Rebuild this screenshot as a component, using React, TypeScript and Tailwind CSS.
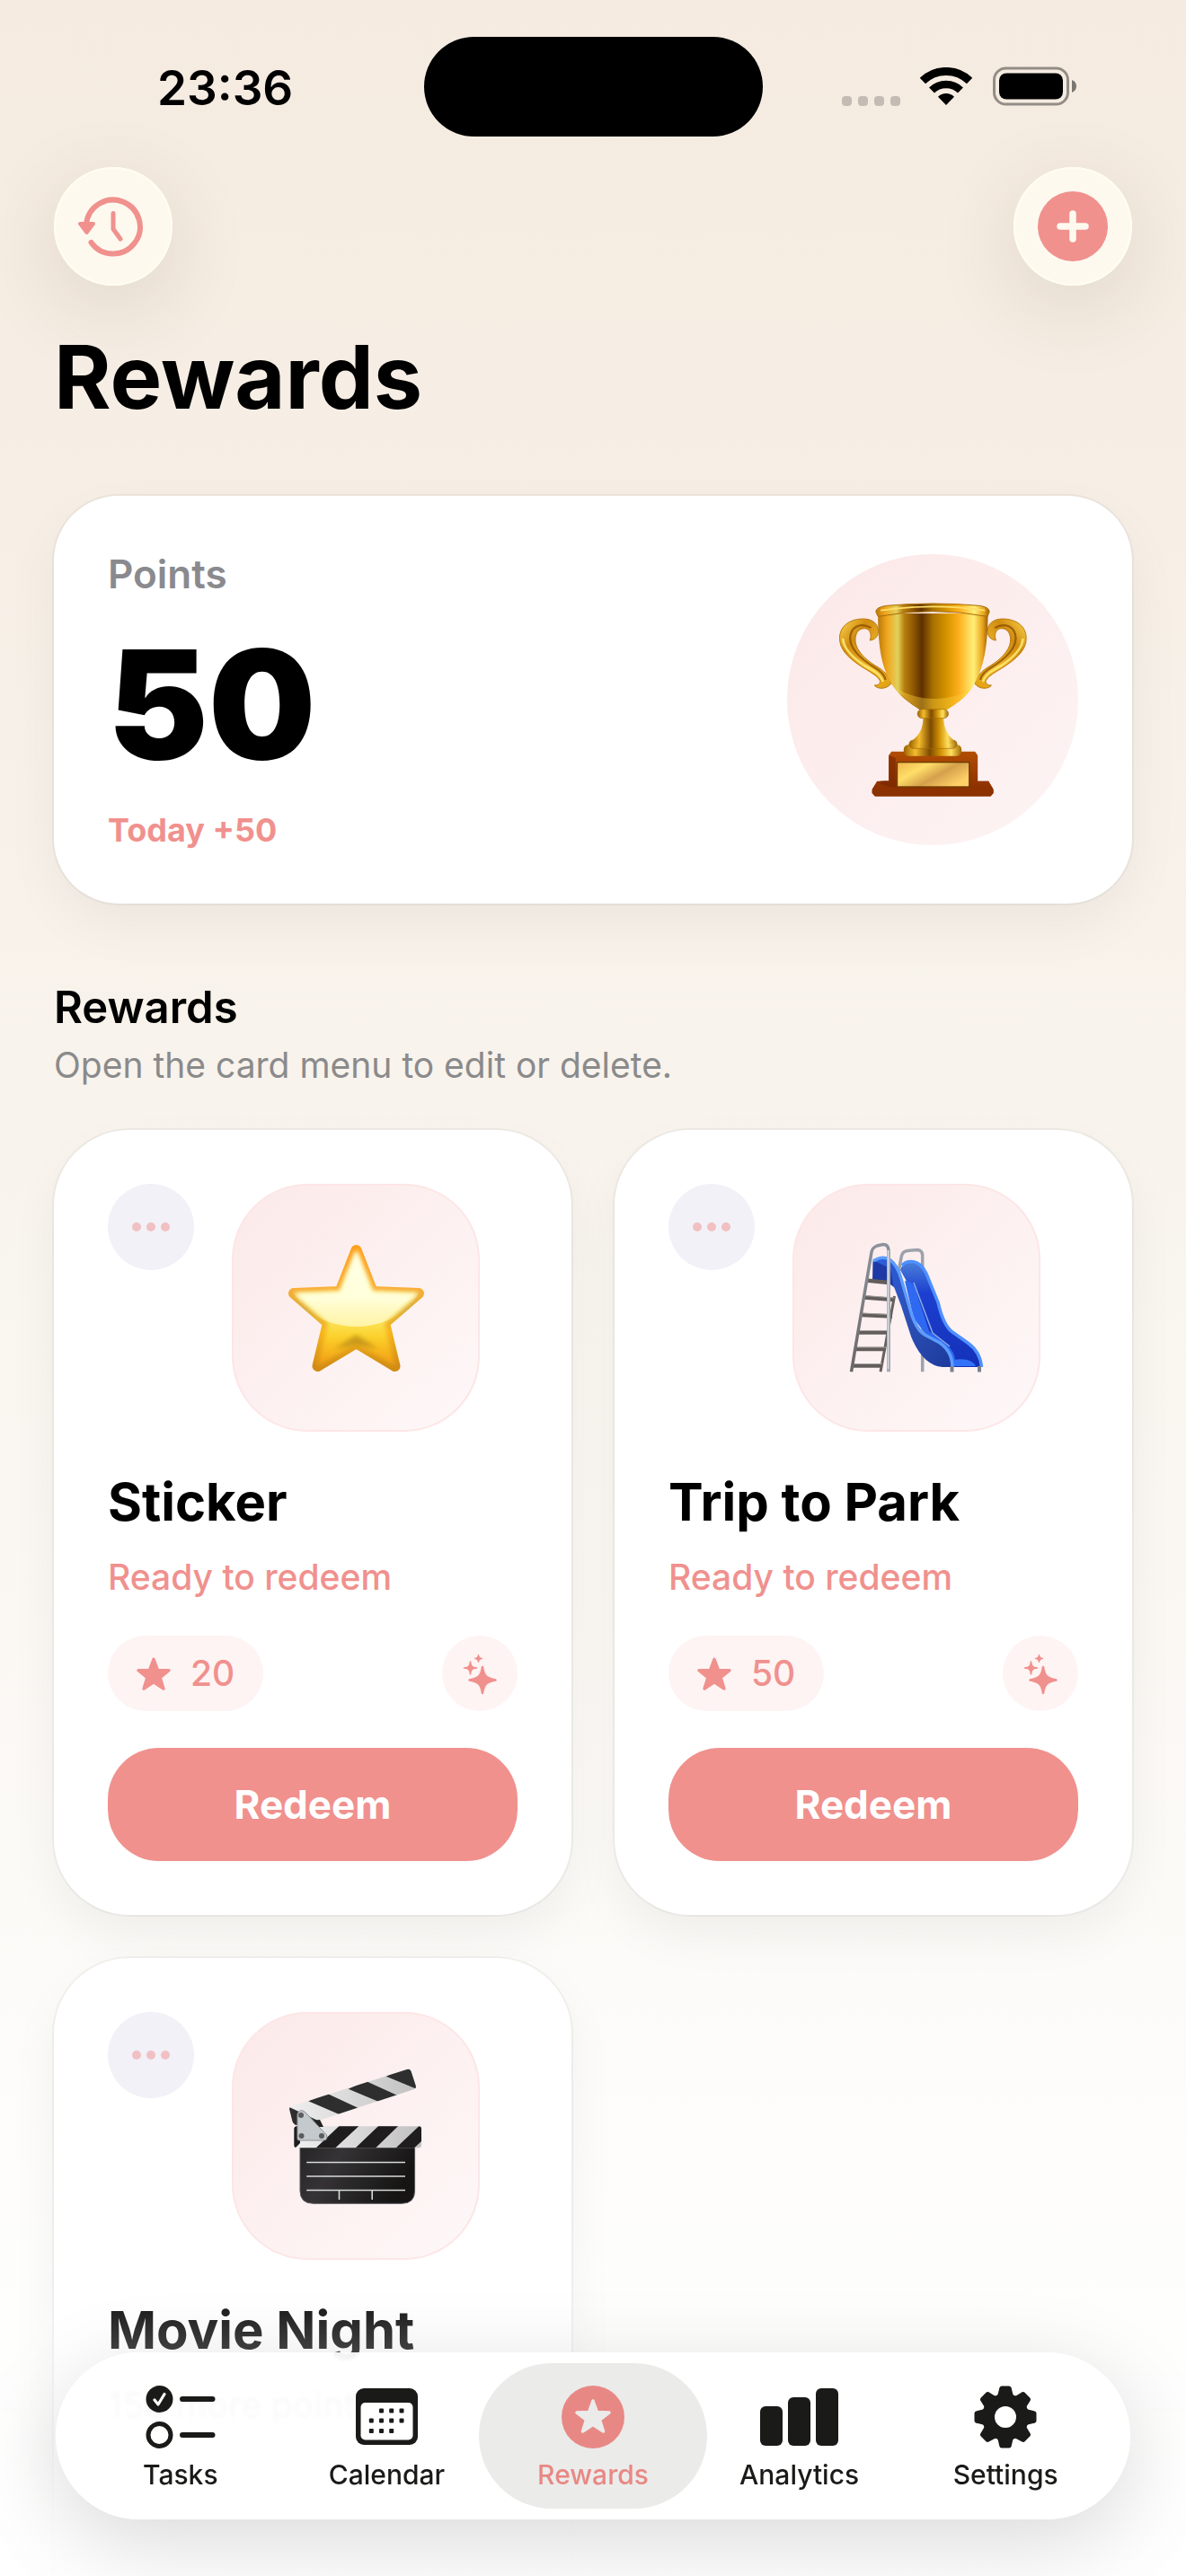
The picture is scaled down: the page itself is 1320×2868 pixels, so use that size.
import type { ReactNode } from "react";

const STAR_PATH =
  "M50 6 L62 38 L95 39 L69 60 L79 93 L50 74 L21 93 L31 60 L5 39 L38 38 Z";

function StarIcon({ className }: { className?: string }) {
  return (
    <svg viewBox="0 0 100 98" className={className} aria-hidden="true">
      <path d={STAR_PATH} fill="currentColor" stroke="currentColor" strokeWidth="9" strokeLinejoin="round" />
    </svg>
  );
}

function HistoryIcon() {
  return (
    <svg viewBox="0 0 132 132" className="size-full" fill="none" stroke="#f0918e" strokeLinecap="round" strokeLinejoin="round" aria-hidden="true">
      <path d="M41.500 84 A30 30 0 1 0 36 64" strokeWidth="6" />
      <path d="M66 51.500 V69 L74 80" strokeWidth="5" />
      <path d="M29 63 H44 L36.500 73 Z" strokeWidth="4" fill="#f0918e" />
    </svg>
  );
}

function PlusIcon() {
  return (
    <svg viewBox="0 0 132 132" className="size-full" aria-hidden="true">
      <circle cx="66" cy="66" r="39" fill="#f0918e" />
      <path d="M66 52 V80 M52 66 H80" stroke="#fef9ef" strokeWidth="7.500" strokeLinecap="round" />
    </svg>
  );
}

function SparklesIcon() {
  return (
    <svg viewBox="0 0 84 84" className="size-full" fill="#f0918e" stroke="#f0918e" strokeLinejoin="round" aria-hidden="true">
      <path d="M45 35 C46.500 45 49 47.500 59.500 49.500 C49 51.500 46.500 54 45 64 C43.500 54 41 51.500 30.500 49.500 C41 47.500 43.500 45 45 35Z" strokeWidth="2.500" />
      <path d="M31.500 29 C32 34 33.500 35.500 38.500 36 C33.500 36.500 32 38 31.500 43 C31 38 29.500 36.500 24.500 36 C29.500 35.500 31 34 31.500 29Z" strokeWidth="1.500" />
      <path d="M40.500 21 C41 24 42 25 45 25.500 C42 26 41 27 40.500 30 C40 27 39 26 36 25.500 C39 25 40 24 40.500 21Z" strokeWidth="1" />
    </svg>
  );
}

function StatusIcons() {
  return (
    <div className="flex items-center" aria-hidden="true">
      <div className="mt-8 mr-[22px] flex gap-[7px]">
        {[0, 1, 2, 3].map((i) => (
          <span key={i} className="size-[11px] rounded-[4px] bg-black/20" />
        ))}
      </div>
      <svg viewBox="0 0 58 42" className="mr-[23px] h-[42px] w-[58px]" fill="none" stroke="#000">
        <path d="M2.900 15 A37.500 37.500 0 0 1 55.100 15" strokeWidth="9" />
        <path d="M13 25.500 A23 23 0 0 1 45 25.500" strokeWidth="8.500" />
        <path d="M29 42 L20 32.700 A13 13 0 0 1 38 32.700Z" fill="#000" stroke="none" />
      </svg>
      <svg viewBox="0 0 94 44" className="h-11 w-[94px]">
        <rect x="1.500" y="2" width="82" height="40" rx="13" fill="none" stroke="#000" strokeOpacity=".4" strokeWidth="3" />
        <rect x="7" y="7.500" width="71" height="29" rx="8" />
        <path d="M88 15 Q93 17 93 22 Q93 27 88 29Z" fillOpacity=".5" />
      </svg>
    </div>
  );
}

function TrophyArt() {
  return (
    <svg viewBox="270 270 650 660" className="h-[220px] w-[217px]" role="img" aria-label="Trophy">
      <defs>
        <linearGradient id="cup" x1="0" x2="1">
          <stop offset="0" stopColor="#b87a0c" />
          <stop offset=".08" stopColor="#f0a41c" />
          <stop offset=".18" stopColor="#e2d15c" />
          <stop offset=".24" stopColor="#b87f0e" />
          <stop offset=".32" stopColor="#905800" />
          <stop offset=".4" stopColor="#5e3000" />
          <stop offset=".5" stopColor="#a87000" />
          <stop offset=".64" stopColor="#dc9800" />
          <stop offset=".74" stopColor="#ffb020" />
          <stop offset=".87" stopColor="#fff078" />
          <stop offset=".95" stopColor="#eaa41e" />
          <stop offset="1" stopColor="#9a6005" />
        </linearGradient>
        <linearGradient id="stem" x1="0" x2="1">
          <stop offset="0" stopColor="#9a6200" />
          <stop offset=".2" stopColor="#f4bc2c" />
          <stop offset=".45" stopColor="#7d4a00" />
          <stop offset=".65" stopColor="#d69708" />
          <stop offset=".82" stopColor="#ffdf60" />
          <stop offset="1" stopColor="#a06800" />
        </linearGradient>
        <linearGradient id="handle" x1="0" x2="1" y1="0" y2="1">
          <stop offset="0" stopColor="#ffd850" />
          <stop offset=".28" stopColor="#d08c10" />
          <stop offset=".6" stopColor="#f0b528" />
          <stop offset="1" stopColor="#e0a010" />
        </linearGradient>
        <linearGradient id="plate" x1="0" x2="1" y2=".6">
          <stop offset="0" stopColor="#eeb54b" />
          <stop offset=".35" stopColor="#ffde68" />
          <stop offset=".65" stopColor="#d5a04c" />
          <stop offset="1" stopColor="#ffd068" />
        </linearGradient>
        <linearGradient id="wood" x1="0" x2="0" y1="0" y2="1">
          <stop offset="0" stopColor="#b24e04" />
          <stop offset="1" stopColor="#8c3000" />
        </linearGradient>
        <g id="trophy-handle">
          <path
            d="M283 395 C283 350 322 330 362 330 C396 330 412 350 412 370 C412 390 400 400 384 402 C391 386 386 362 366 362 C342 362 333 385 336 408 C340 438 372 468 402 486 C434 504 446 520 455 546 C440 566 410 566 399 552 C414 552 420 545 417 535 C406 516 370 500 345 482 C308 456 283 430 283 395Z"
            fill="url(#handle)" stroke="#b87a10" strokeWidth="3"
          />
          <path d="M388 360 C350 340 318 358 318 396 C320 438 364 470 396 490 C420 504 434 516 436 534" fill="none" stroke="#8a4c00" strokeWidth="7" strokeOpacity=".75" />
          <path d="M294 396 C296 430 330 462 366 486 C400 504 420 516 428 540" fill="none" stroke="#fff07a" strokeWidth="8" strokeOpacity=".8" />
        </g>
      </defs>
      <use href="#trophy-handle" />
      <use href="#trophy-handle" transform="matrix(-1 0 0 1 1189 0)" />
      <path d="M391 900 L408 872 H780 L797 900 V912 L787 923 H401 L391 912Z" fill="#8c3100" />
      <path d="M447 786 L456 773 H735 L744 786 V872 H780 L795 898 H393 L408 875 Q430 868 447 872Z" fill="url(#wood)" />
      <path d="M447 786 L470 794 V893 Q430 890 410 876 L447 870Z" fill="#7a2600" fillOpacity=".65" />
      <rect x="475" y="809" width="241" height="82" fill="url(#plate)" stroke="#6b3b00" strokeWidth="4" />
      <rect x="497" y="750" width="193" height="38" rx="16" fill="url(#stem)" />
      <rect x="515" y="735" width="160" height="28" rx="14" fill="url(#stem)" stroke="#a06a08" strokeWidth="2" />
      <path d="M562 655 H630 C630 700 645 722 672 742 C640 756 550 756 518 742 C548 722 562 700 562 655Z" fill="url(#stem)" />
      <path
        d="M411 312 C411 430 425 500 462 556 C490 598 530 618 550 634 H640 C666 618 702 598 728 556 C764 498 778 420 778 312Z"
        fill="url(#cup)"
      />
      <path d="M470 560 C500 598 530 618 550 634 H640 C666 618 694 600 718 568 C640 610 540 605 470 560Z" fill="#ffcf3a" fillOpacity=".4" />
      <rect x="543" y="632" width="103" height="30" rx="15" fill="url(#stem)" stroke="#a06a08" strokeWidth="2" />
      <path d="M404 306 Q404 291 440 286 Q594 272 750 286 Q783 291 783 306 L777 322 Q594 288 411 322Z" fill="url(#cup)" stroke="#a76c08" strokeWidth="3" />
      <path d="M420 302 Q594 276 768 302" fill="none" stroke="#ffdf68" strokeWidth="5" />
    </svg>
  );
}

function GlossyStarArt() {
  const outline =
    "M354.500 152 L372.500 198 L424 200 L386 233 L397.500 281 L354.500 255 L311.500 281 L323 233 L285 200 L336.500 198 Z";
  return (
    <svg viewBox="279 145 151 143" className="h-[143px] w-[151px]" role="img" aria-label="Star">
      <defs>
        <linearGradient id="star-edge" x1="0" x2="0" y1="0" y2="1">
          <stop offset="0" stopColor="#ff9f1a" />
          <stop offset=".33" stopColor="#f8ad34" />
          <stop offset=".5" stopColor="#dcae3c" />
          <stop offset=".7" stopColor="#f7b41c" />
          <stop offset="1" stopColor="#d18c16" />
        </linearGradient>
        <linearGradient id="star-core" x1="0" x2="0" y1="0" y2="1">
          <stop offset="0" stopColor="#fff3a0" />
          <stop offset=".55" stopColor="#fdec6c" />
          <stop offset=".75" stopColor="#fbd02a" />
          <stop offset="1" stopColor="#f39a12" />
        </linearGradient>
        <linearGradient id="star-gloss" x1="0" x2="0" y1="0" y2="1">
          <stop offset="0" stopColor="#ffffe8" />
          <stop offset=".4" stopColor="#ffffdc" />
          <stop offset=".66" stopColor="#fff3a4" />
        </linearGradient>
        <filter id="star-soft" x="-10%" y="-10%" width="120%" height="120%">
          <feGaussianBlur stdDeviation="2.500" />
        </filter>
        <clipPath id="star-dome">
          <ellipse cx="354.500" cy="175" rx="76" ry="62" />
        </clipPath>
      </defs>
      <path d={outline} fill="url(#star-edge)" stroke="url(#star-edge)" strokeWidth="12" strokeLinejoin="round" />
      <path d={outline} fill="url(#star-core)" filter="url(#star-soft)" />
      <path d="M330 262 L354.500 246 L379 262 L354.500 257Z" fill="#a87c10" fillOpacity=".6" filter="url(#star-soft)" />
      <g clipPath="url(#star-dome)">
        <path d={outline} fill="url(#star-gloss)" filter="url(#star-soft)" />
      </g>
    </svg>
  );
}

function SlideArt() {
  return (
    <svg viewBox="284 145 150 146" className="h-[146px] w-[150px]" fill="none" role="img" aria-label="Playground slide">
      <defs>
        <linearGradient id="slide-side" x1="0" x2="1" y1="0" y2="1">
          <stop offset="0" stopColor="#2c5fe0" />
          <stop offset=".5" stopColor="#2d4fb4" />
          <stop offset="1" stopColor="#1c3a9c" />
        </linearGradient>
        <linearGradient id="slide-back" x1="0" x2="0" y1="0" y2="1">
          <stop offset="0" stopColor="#4b80d8" />
          <stop offset=".3" stopColor="#1c3fd0" />
          <stop offset="1" stopColor="#1431b8" />
        </linearGradient>
        <linearGradient id="steel" x1="0" x2="0" y1="0" y2="1">
          <stop offset="0" stopColor="#8b929c" />
          <stop offset="1" stopColor="#6a6766" />
        </linearGradient>
      </defs>
      <path d="M334.500 205 L319 289.300" stroke="#67615e" strokeWidth="3" />
      <path d="M339 178 L342.500 160 Q344 155 349 154.500 L360 153.500 Q365.700 154 365.700 160 V289.300" stroke="#9ca2ab" strokeWidth="3.500" />
      <path d="M310.500 166 Q322 158 334 168 L338 198 L330 192 L310 188Z" fill="#1d3aa6" />
      <path
        d="M341 176 Q344 166 353.500 166.500 Q364 167 370 180 L383 212 Q389 238 399 245 L416 257 Q431 267 432.500 284 H398 L372 250 L350 192Z"
        fill="url(#slide-back)"
      />
      <path d="M343 171 Q346 166.500 353.500 166.500 Q364 167 370 180 L383 212 Q389 238 399 245 L416 257 Q430 267 431.500 284" stroke="#4f90ff" strokeWidth="3.500" />
      <path d="M346 188 Q357 188 360 204 L373 244 L392 258 Q402 268 402 276 L424 283 H396 L356 230Z" fill="#2f69f2" />
      <path d="M356 190 L377 246 L396 261" stroke="#88a8e8" strokeWidth="1.500" />
      <path d="M400 276 Q420 273 425 283 H398Z" fill="#3372fb" />
      <path
        d="M312 166 Q322 158 330 164 Q338 170 342 186 L352 222 Q358 242 368 248 L386 258 Q400 268 400 284 H388 Q366 282 353 250 L342 216 L333 192 L330 174Z"
        fill="url(#slide-side)"
      />
      <path d="M311 166 Q322 159 330 165 Q338 171 342 186 L352 220 Q358 242 368 248 L385 257 Q399 267 399 284" stroke="#5c9cff" strokeWidth="3.500" />
      <g stroke="#635e5b" strokeWidth="4.500">
        <path d="M303 187.500 L328 190 M301 206.500 L334 209 M298.500 226 L332 227.500 M295 245.500 H327 M292 264 H325 M289 282.500 H321" />
      </g>
      <g stroke="#a5a19d" strokeWidth="1">
        <path d="M301 204.500 L334 207 M298.500 224 L330 225.500 M295 243.500 H327 M292 262 H325 M289 280.500 H321" />
      </g>
      <path d="M286.500 289.300 L309 156 Q310 151 315 149 L322 147.500 Q328 147.500 328 155" stroke="url(#steel)" strokeWidth="3.500" />
      <path d="M328 154 V289.300" stroke="#a6acb4" strokeWidth="4" />
      <path d="M327.500 154 V286" stroke="#dfe4ea" strokeWidth="1.200" />
      <path d="M398.500 283 V289.500 M429 283 V289.500" stroke="#7b8290" strokeWidth="4" />
    </svg>
  );
}

function ClapperArt() {
  return (
    <svg viewBox="279 144 150 153" className="h-[153px] w-[150px]" role="img" aria-label="Clapper board">
      <defs>
        <linearGradient id="slate" x1="0" x2="1" y1="0" y2=".3">
          <stop offset="0" stopColor="#262526" />
          <stop offset=".35" stopColor="#353335" />
          <stop offset="1" stopColor="#161514" />
        </linearGradient>
        <linearGradient id="chalk" x1="0" x2="1">
          <stop offset="0" stopColor="#f0f0f0" />
          <stop offset="1" stopColor="#c0c0c0" />
        </linearGradient>
        <clipPath id="arm">
          <path d="M280 190 Q280 188 282 187 L411 146 Q414 145 415.500 148 L421 165 Q421 167 419 168 L314 202.500 L287 208 Q284 206 283.500 204Z" />
        </clipPath>
        <clipPath id="bar">
          <rect x="285.300" y="209.300" width="141.700" height="24" rx="3" />
        </clipPath>
      </defs>
      <path d="M292 232 H419.600 V281 Q419.600 295.300 405 295.300 H307 Q292 295.300 292 281Z" fill="url(#slate)" stroke="#55555a" strokeWidth="1" />
      <path d="M299.200 249.500 H409 M299.200 265 H409 M299.200 280.500 H409 M335.500 280.500 V291 M372.200 280.500 V291" stroke="#d8dada" strokeWidth="1.600" fill="none" />
      <g clipPath="url(#arm)">
        <path d="M278 140 H424 V212 H278Z" fill="url(#chalk)" />
        <path d="M278 187 L314 204 L284 212 L278 205Z M301.200 181.300 L322.400 173 L356.300 188.700 L335.500 196Z M345.700 167.700 L365.300 159 L401 175.300 L379.600 182Z M387.800 153.700 L414.300 140 L426 150 L421.200 167.700Z" fill="#2e2e2e" />
      </g>
      <g clipPath="url(#bar)">
        <path d="M285 209 H428 V234 H285Z" fill="url(#chalk)" />
        <path d="M285 209 H292 V228 L286 234 H285Z M335.500 209 H357.500 L330.600 234 H309Z M379.200 209 H401.200 L375.500 234 H353Z M424.500 209 H428 V225 L418.400 234 H398Z" fill="#1f1d1e" />
      </g>
      <path d="M306 203 L314 202 L318 210 H310Z" fill="#222" />
      <path d="M289 196 Q290 191.700 294 191.700 Q297 192 299 195 L321.500 219 Q323 225 318 225 H291 Q289 225 289 223Z" fill="#c3c9cd" stroke="#8d9296" strokeWidth="1" />
      <g fill="#5b5b5d">
        <circle cx="293" cy="197" r="3" />
        <circle cx="293.500" cy="220" r="3" />
        <circle cx="316" cy="220" r="3" />
      </g>
    </svg>
  );
}

function TasksIcon() {
  return (
    <svg viewBox="0 0 78 72" className="h-[72px] w-[78px]" fill="none" stroke="#1a1a18" strokeLinecap="round" aria-hidden="true">
      <circle cx="15.500" cy="16" r="15" fill="#1a1a18" stroke="none" />
      <path d="M10 17 L14 22 L21 10.500" stroke="#fff" strokeWidth="3.200" strokeLinejoin="round" />
      <circle cx="15.500" cy="56" r="12.500" strokeWidth="5" />
      <path d="M41 16 H74.500 M41 56 H74.500" strokeWidth="6" />
    </svg>
  );
}

function CalendarIcon() {
  const dots = [
    [28.5, 29], [39.7, 29], [51, 29],
    [17.3, 40], [28.5, 40], [39.7, 40], [51, 40],
    [17.3, 51.5], [28.5, 51.5], [39.7, 51.5],
  ];
  return (
    <svg viewBox="0 0 69 72" className="h-[72px] w-[69px]" fill="#1a1a18" aria-hidden="true">
      <rect x="0" y="4" width="69" height="63" rx="9" />
      <rect x="5.500" y="20" width="58" height="41.500" rx="5" fill="#fff" />
      {dots.map(([x, y]) => (
        <rect key={`${x}-${y}`} x={x - 2.5} y={y - 2.5} width="5" height="5" rx="1" />
      ))}
    </svg>
  );
}

function RewardsIcon() {
  return (
    <svg viewBox="0 0 72 72" className="size-[72px]" aria-hidden="true">
      <circle cx="36" cy="36" r="35" fill="#e88885" />
      <path
        d="M36 18 L40.500 30.500 L54 31 L43.500 39 L47.500 52 L36 44.500 L24.500 52 L28.500 39 L18 31 L31.500 30.500Z"
        fill="#ebebea" stroke="#ebebea" strokeWidth="3.500" strokeLinejoin="round"
      />
    </svg>
  );
}

function AnalyticsIcon() {
  return (
    <svg viewBox="0 0 88 72" className="h-[72px] w-[88px]" fill="#1a1a18" aria-hidden="true">
      <rect x="0" y="24" width="25" height="44" rx="6" />
      <rect x="31" y="14" width="25" height="54" rx="6" />
      <rect x="62" y="4" width="25" height="64" rx="6" />
    </svg>
  );
}

function SettingsIcon() {
  return (
    <svg viewBox="0 0 72 72" className="size-[72px]" aria-hidden="true">
      <circle cx="36" cy="36" r="19" fill="none" stroke="#1a1a18" strokeWidth="14" />
      {[0, 45, 90, 135, 180, 225, 270, 315].map((deg) => (
        <path
          key={deg}
          d="M26 14 Q28 11 29 5 Q29.500 1.500 32 1.500 H40 Q42.500 1.500 43 5 Q44 11 46 14Z"
          fill="#1a1a18"
          transform={`rotate(${deg} 36 36)`}
        />
      ))}
    </svg>
  );
}

type Reward = {
  title: string;
  status: string;
  cost?: number;
  art: ReactNode;
};

// A reward without a cost is still locked.
const rewards: Reward[] = [
  { title: "Sticker", status: "Ready to redeem", cost: 20, art: <GlossyStarArt /> },
  { title: "Trip to Park", status: "Ready to redeem", cost: 50, art: <SlideArt /> },
  { title: "Movie Night", status: "150 more points", art: <ClapperArt /> },
];

const tabs = [
  { label: "Tasks", icon: <TasksIcon /> },
  { label: "Calendar", icon: <CalendarIcon /> },
  { label: "Rewards", icon: <RewardsIcon />, active: true },
  { label: "Analytics", icon: <AnalyticsIcon /> },
  { label: "Settings", icon: <SettingsIcon /> },
];

function RoundButton({ label, children }: { label: string; children: ReactNode }) {
  return (
    <button
      type="button"
      aria-label={label}
      className="size-[132px] rounded-full bg-[#fef9ef] shadow-[inset_0_0_0_2px_#fffdf0,0_24px_96px_rgba(60,40,20,0.12)]"
    >
      {children}
    </button>
  );
}

function RewardCard({ reward }: { reward: Reward }) {
  const ready = reward.cost !== undefined;
  return (
    <article className="flex flex-col rounded-[84px] bg-white p-[60px] shadow-[0_0_0_2px_rgba(0,0,0,0.04),0_24px_54px_rgba(0,0,0,0.05)]">
      <div className="flex items-start">
        <button
          type="button"
          aria-label={`${reward.title} menu`}
          className="flex size-24 items-center justify-center gap-[6px] rounded-full bg-[#f2f1f7]"
        >
          <span className="size-[10px] rounded-full bg-[#f1c0c3]" />
          <span className="size-[10px] rounded-full bg-[#f1c0c3]" />
          <span className="size-[10px] rounded-full bg-[#f1c0c3]" />
        </button>
        <div className="flex flex-1 justify-center">
          <div className="flex size-[276px] items-center justify-center rounded-[84px] border-2 border-[#fde6e6] bg-linear-to-br from-[#fce9e9] to-[#fef8f8]">
            {reward.art}
          </div>
        </div>
      </div>
      <h3 className="mt-[42px] text-[58px] leading-[72px] font-bold whitespace-nowrap">{reward.title}</h3>
      <p className={`mt-6 text-[39px] leading-[48px] font-medium whitespace-nowrap ${ready ? "text-[#f0918e]" : "text-[#6c6c70]"}`}>
        {reward.status}
      </p>
      {ready && (
        <>
          <div className="mt-[41px] flex items-center justify-between">
            <span className="flex h-[84px] items-center gap-[22px] rounded-full bg-[#fef4f3] px-8 text-[39px] leading-[48px] font-medium text-[#f0918e]">
              <StarIcon className="h-[37px] w-[38px]" />
              {reward.cost}
            </span>
            <span className="size-[84px] rounded-full bg-[#fef4f3]">
              <SparklesIcon />
            </span>
          </div>
          <button
            type="button"
            className="mt-[41px] h-[126px] rounded-[57px] bg-[#f0918e] text-[44px] leading-[54px] font-bold text-white"
          >
            Redeem
          </button>
        </>
      )}
    </article>
  );
}

export default function App() {
  return (
    <div className="relative h-screen overflow-hidden bg-linear-to-b from-[#f5ebe0] via-[#f8f3ec] via-42% to-[#fefefd] to-90% font-['Inter','Liberation_Sans',sans-serif] text-black">
      {/* Status bar */}
      <div className="grid h-[186px] grid-cols-[1fr_auto_1fr] pt-[41px]">
        <span className="mt-6 ml-[175px] text-[53px] leading-[66px] font-semibold">23:36</span>
        <span className="h-[111px] w-[377px] rounded-full bg-black" />
        <div className="mt-[33px] mr-[121px] flex h-[44px] justify-end">
          <StatusIcons />
        </div>
      </div>

      <main className="px-[60px]">
        <header>
          <div className="flex justify-between">
            <RoundButton label="History">
              <HistoryIcon />
            </RoundButton>
            <RoundButton label="Add reward">
              <PlusIcon />
            </RoundButton>
          </div>
          <h1 className="mt-[42px] text-[97px] leading-[120px] font-bold">Rewards</h1>
        </header>

        {/* Points summary */}
        <section className="mt-[72px] flex items-center justify-between rounded-[72px] bg-white p-[60px] shadow-[0_0_0_2px_rgba(0,0,0,0.04),0_24px_60px_rgba(0,0,0,0.05)]">
          <div className="flex flex-col gap-[34px]">
            <p className="text-[44px] leading-[54px] font-semibold text-[#8a8a8e]">Points</p>
            <p className="text-[168px] leading-[168px] font-black">50</p>
            <p className="text-[36px] leading-[44px] font-bold text-[#f0918e]">Today +50</p>
          </div>
          <div className="flex size-[324px] items-center justify-center rounded-full bg-linear-to-br from-[#fce8e8] to-[#fdf4f4]">
            <TrophyArt />
          </div>
        </section>

        <section className="mt-[86px]">
          <h2 className="text-[49px] leading-[60px] font-semibold">Rewards</h2>
          <p className="mt-[10px] text-[39px] leading-[48px] text-[#8a8a8b]">Open the card menu to edit or delete.</p>
          <div className="mt-12 grid auto-rows-fr grid-cols-2 gap-12">
            {rewards.map((reward) => (
              <RewardCard key={reward.title} reward={reward} />
            ))}
          </div>
        </section>
      </main>

      {/* Fade behind the tab bar */}
      <div className="pointer-events-none fixed inset-x-0 bottom-0 h-[340px] bg-linear-to-b from-white/0 via-white/30 via-30% to-white/90 to-80%" />

      <nav className="fixed inset-x-[62px] bottom-[63px] grid grid-cols-5 rounded-full bg-white/93 px-6 py-3 shadow-[0_24px_96px_rgba(0,0,0,0.15)] backdrop-blur-[2px]">
        {tabs.map((tab) => (
          <button
            key={tab.label}
            type="button"
            aria-current={tab.active ? "page" : undefined}
            className={`-mx-3 flex flex-col items-center gap-[10px] rounded-full pt-6 pb-5 text-[30px] leading-[36px] font-medium ${
              tab.active ? "bg-[#ebebea] text-[#e88885]" : "text-[#1a1a18]"
            }`}
          >
            {tab.icon}
            {tab.label}
          </button>
        ))}
      </nav>
    </div>
  );
}
